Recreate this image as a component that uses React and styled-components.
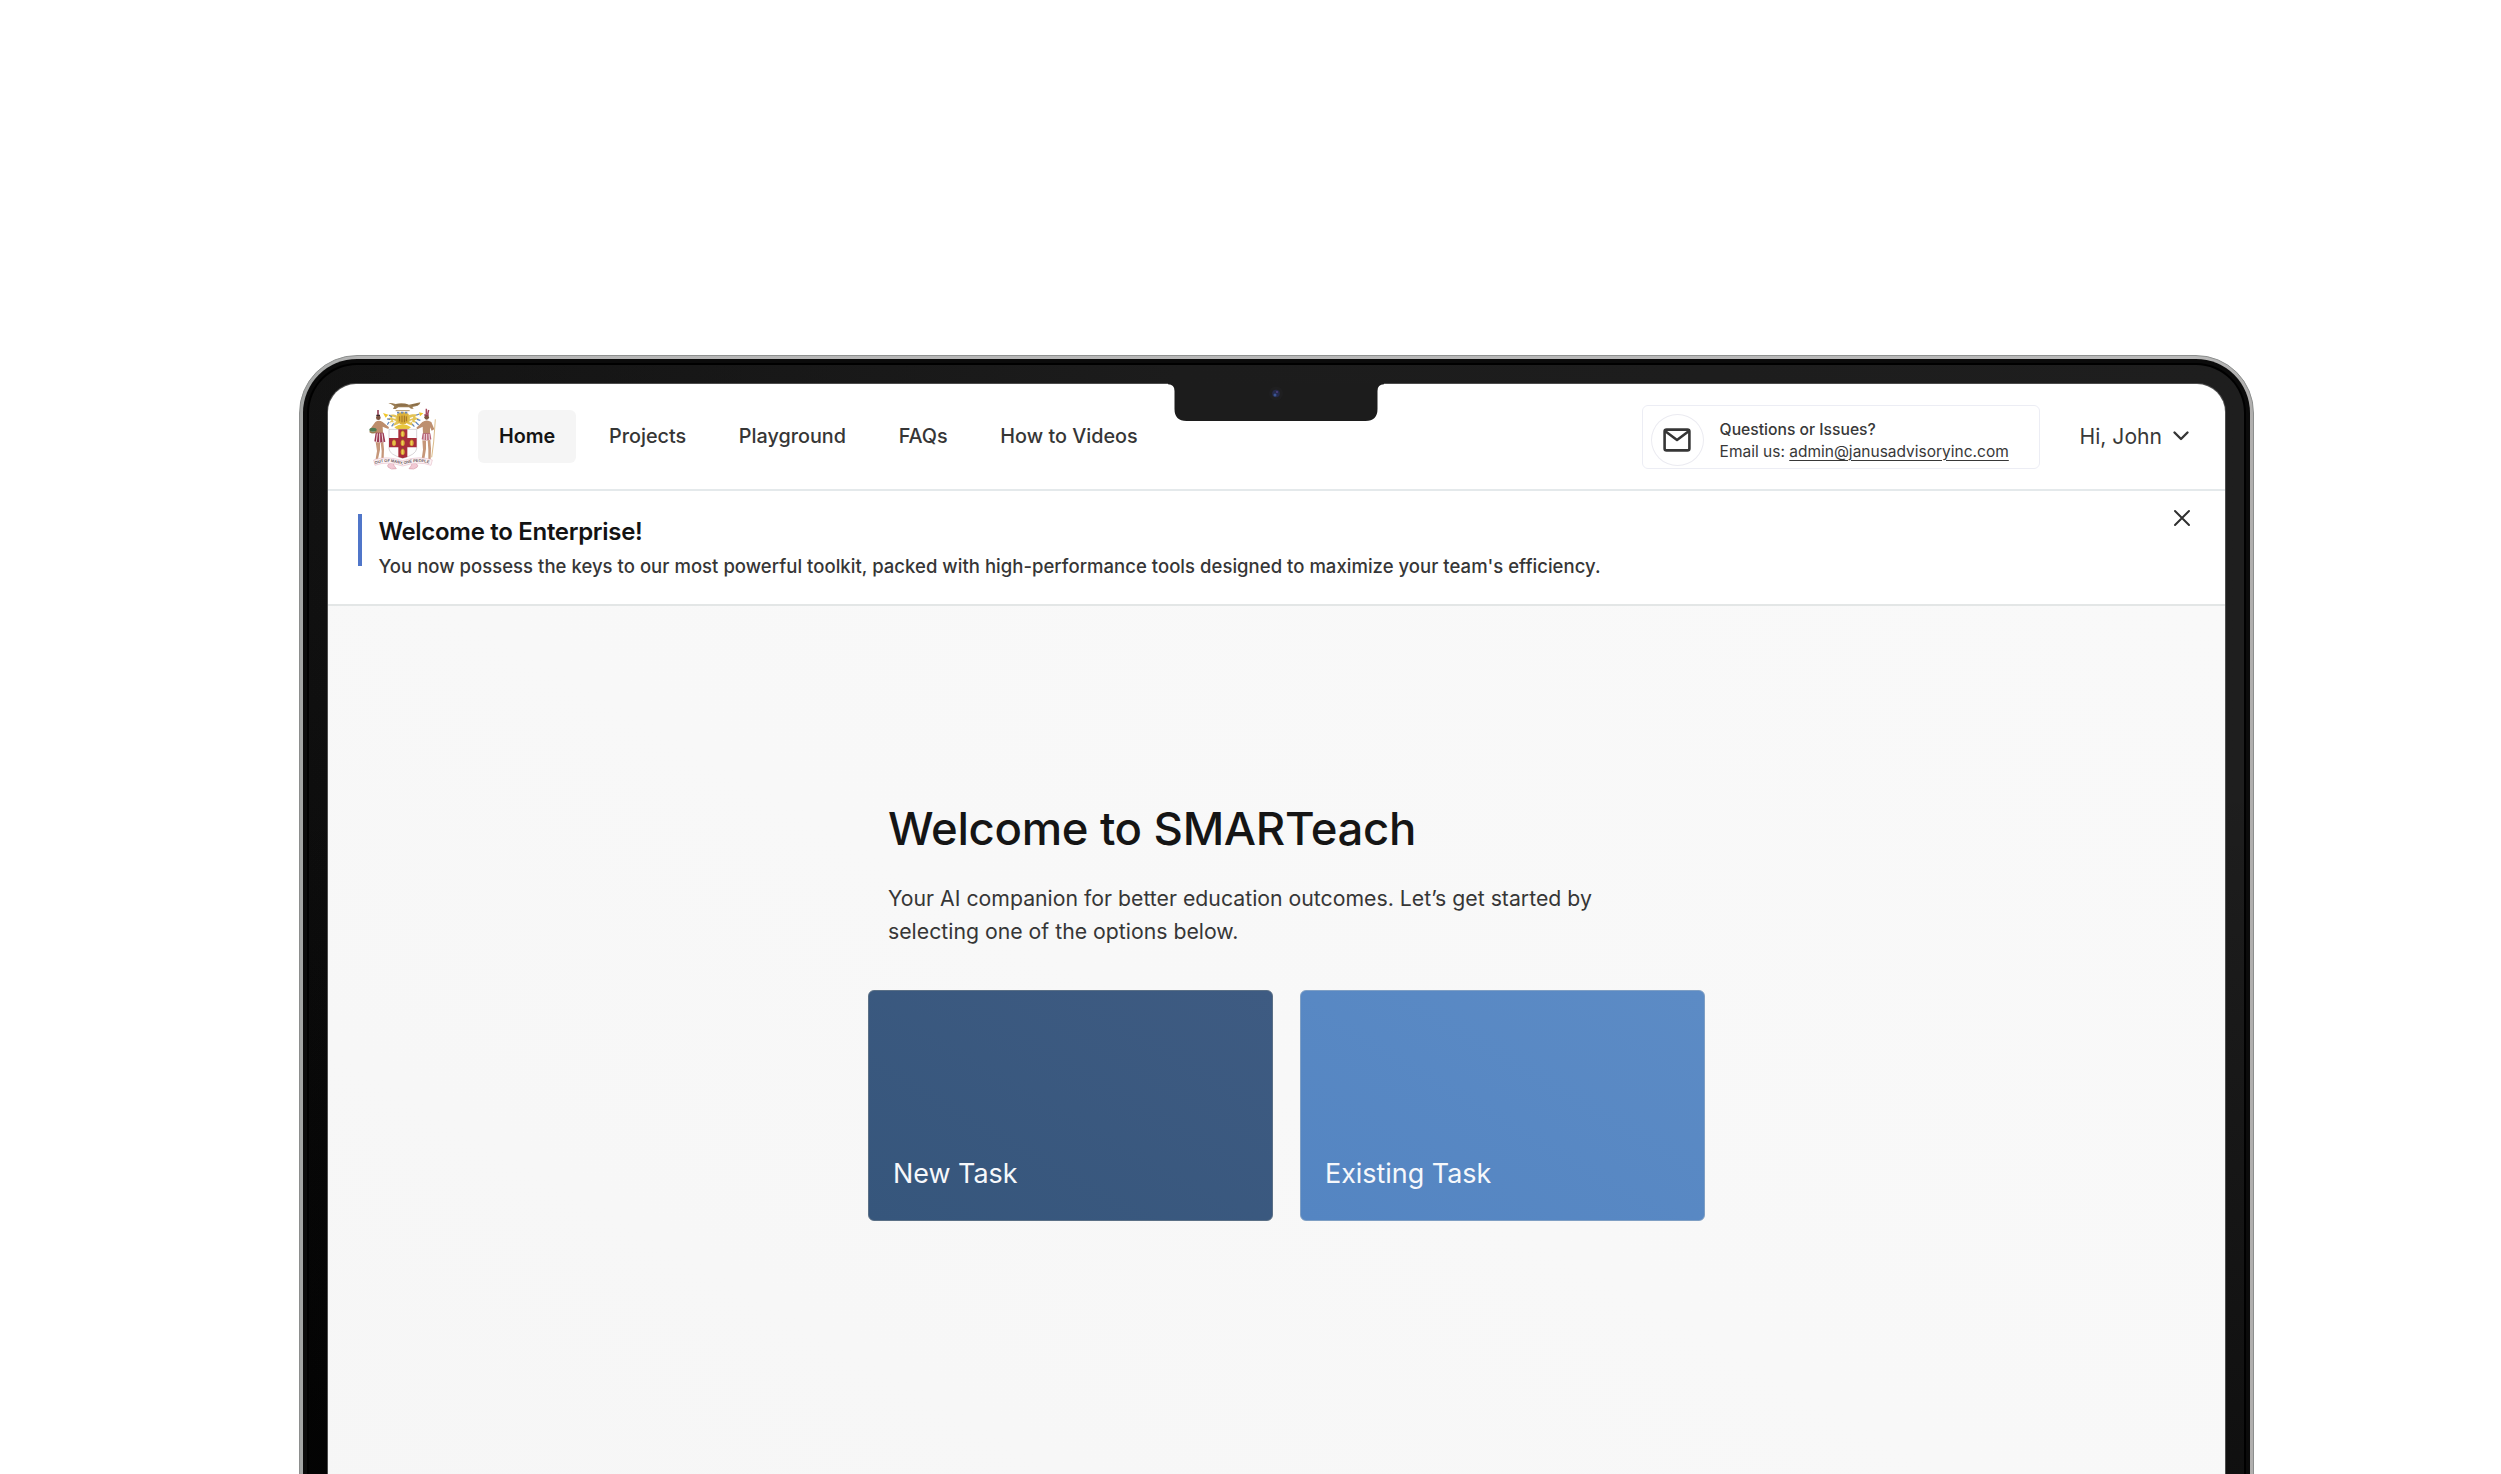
import React from "react";
import styled, { createGlobalStyle } from "styled-components";

const GlobalStyle = createGlobalStyle`
  * { box-sizing: border-box; }
  body {
    margin: 0;
    background: #fff;
    font-family: Inter, "Liberation Sans", sans-serif;
    -webkit-font-smoothing: antialiased;
  }
  h1, h2, p { margin: 0; }
`;

const Stage = styled.div`
  width: 2501px;
  height: 1474px;
  padding: 355px 0 0 299px;
  overflow: hidden;
  background: #fff;
`;

const Rim = styled.div`
  width: 1955px;
  height: 1200px;
  padding: 3px 3px 0;
  border: 1px solid #8d8f8e;
  border-radius: 58px 58px 0 0;
  background: linear-gradient(90deg, #a3a5a4, #b5b5b5 3%, #b8b8b8 97%, #b0afae);
`;

const Gasket = styled.div`
  height: 100%;
  padding: 4px 4px 0;
  border-radius: 54px 54px 0 0;
  background: #0b0b0b;
`;

const Bezel = styled.div`
  position: relative;
  height: 100%;
  padding: 19px 19px 0;
  border: 2px solid #000;
  border-bottom: 0;
  border-radius: 50px 50px 0 0;
  background: linear-gradient(180deg, rgba(3, 3, 3, 0) 35%, rgba(3, 3, 3, 0.55) 95%),
    linear-gradient(90deg, rgba(30, 30, 30, 0) 0%, #1c1c1c 45%, #1e1e1e 100%),
    linear-gradient(180deg, #131313 0%, #0c0c0c 50%, #040404 90%);
`;

const Screen = styled.div`
  display: flex;
  flex-direction: column;
  height: 100%;
  border-radius: 28px 28px 0 0;
  overflow: hidden;
  background: #fff;
  box-shadow: 0 0 0 1px #4c4c4c;
`;

const Notch = styled.svg`
  position: absolute;
  left: 859px;
  top: 18px;
`;

const Header = styled.header`
  display: flex;
  align-items: center;
  height: 107px;
  padding: 0 35px 0 41px;
  border-bottom: 2px solid #e4e9eb;
`;

const Nav = styled.nav`
  display: flex;
  gap: 10.7px;
  margin-left: 41px;
`;

const NavItem = styled.a`
  padding: 0 21px;
  margin-right: ${(p) => (p.$active ? "1px" : 0)};
  border-radius: 6px;
  line-height: 53px;
  font-size: 19.8px;
  font-weight: ${(p) => (p.$active ? 600 : 500)};
  color: ${(p) => (p.$active ? "#141414" : "#363636")};
  background: ${(p) => (p.$active ? "#f5f5f5" : "transparent")};
`;

const Contact = styled.div`
  display: flex;
  align-items: center;
  width: 398px;
  height: 64px;
  margin-left: auto;
  padding: 6px 0 0 8px;
  border: 1.5px solid #ecedf4;
  border-radius: 6px;
`;

const IconRing = styled.span`
  display: grid;
  place-items: center;
  width: 53px;
  height: 52px;
  border: 1.5px solid #ebebf1;
  border-radius: 50%;
`;

const ContactText = styled.div`
  margin-left: 16px;
  padding-top: 2px;
  font-size: 15.5px;
  line-height: 21.5px;
  color: #383838;
`;

const ContactTitle = styled.p`
  font-size: 15.7px;
  font-weight: 500;
`;

const MailLink = styled.a`
  text-decoration: underline;
  text-decoration-thickness: 1.3px;
  text-underline-offset: 3px;
`;

const User = styled.div`
  display: flex;
  align-items: center;
  gap: 10px;
  margin-left: 40px;
  padding-bottom: 1px;
  font-size: 21.1px;
  font-weight: 400;
  color: #383838;
`;

const Banner = styled.section`
  display: flex;
  align-items: flex-start;
  height: 115px;
  padding: 23px 34px 0 30px;
  border-bottom: 2px solid #e3e6e6;
`;

const Accent = styled.span`
  width: 4px;
  height: 52px;
  margin-right: 16.5px;
  background: #5076c9;
`;

const BannerTitle = styled.h2`
  padding-top: 1px;
  font-size: 24px;
  font-weight: 600;
  line-height: 34px;
  letter-spacing: -0.3px;
  color: #131313;
`;

const BannerText = styled.p`
  font-size: 18.5px;
  font-weight: 500;
  line-height: 34.5px;
  letter-spacing: 0.033px;
  color: #363636;
`;

const Close = styled.svg`
  margin: -5px 0 0 auto;
`;

const Main = styled.main`
  flex: 1;
  padding: 196px 0 0 540px;
  background: linear-gradient(210deg, #f9f9f9, #f8f8f8 50%, #f6f6f6);
`;

const Title = styled.h1`
  padding-left: 20px;
  font-size: 45.5px;
  font-weight: 500;
  line-height: 54px;
  letter-spacing: -0.33px;
  color: #151515;
`;

const Lead = styled.p`
  width: 760px;
  padding: 26px 0 0 20px;
  font-size: 21.25px;
  line-height: 33.3px;
  color: #363636;
`;

const Cards = styled.div`
  display: flex;
  gap: 27px;
  margin-top: 41px;
`;

const Card = styled.button`
  display: flex;
  align-items: flex-end;
  width: 405px;
  height: 231px;
  padding: 0 24px 29px;
  border: 1px solid ${(p) => p.$edge};
  border-radius: 6px;
  font: 400 26.9px/36px Inter, "Liberation Sans", sans-serif;
  color: #f6f8fb;
  background: linear-gradient(30deg, ${(p) => p.$from}, ${(p) => p.$to});
`;

const Crest = () => (
  <svg width="68" height="70" viewBox="0 0 204 210">
    {/* mantling */}
    <path d="M98 52 C80 32 70 38 58 38 L66 46 L54 50 L68 55 L60 62 L78 60 L72 72 L88 66 Z" fill="#e3c356" />
    <path d="M104 52 C122 32 132 38 146 37 L138 45 L150 50 L136 55 L144 62 L128 60 L134 72 L116 66 Z" fill="#e3c356" />
    <path d="M42 33 l16 5 -8 9z M150 31 l13 3 -10 9z" fill="#f0c62a" />
    <path d="M60 40 l9 4 M54 51 l9 1 M60 60 l-5 8 M74 64 l-6 9 M142 40 l9 -4 M144 52 l10 3 M140 60 l9 9 M130 66 l6 8" stroke="#5d83bd" strokeWidth="3.5" />
    <path d="M70 46 l10 3 M72 55 l8 5 M64 66 l6 -4 M132 46 l-9 4 M130 56 l-8 4" stroke="#fbf9f0" strokeWidth="4.5" />
    {/* helmet and wreath */}
    <path d="M84 36 Q101 24 119 36 L118 60 Q101 76 86 60 Z" fill="#dcb23a" />
    <path d="M84 32 h36" stroke="#6c88b4" strokeWidth="5" strokeDasharray="7 5" />
    <path d="M92 43 v15 M99 41 v20 M106 41 v20 M112 43 v15" stroke="#94651f" strokeWidth="2.6" />
    <path d="M76 76 Q101 58 126 76 L118 82 H84 Z" fill="#e8c63c" />
    {/* crocodile */}
    <path d="M58 3 Q68 2 80 6 Q100 1 120 8 L154 1 Q155 7 146 11 L130 15 L134 20 H126 L120 16 H88 L80 21 H72 L76 13 Q66 6 58 3 Z" fill="#9a7c53" />
    <path d="M80 26 h42" stroke="#b6945a" strokeWidth="3" />
    <path d="M82 9 h34 M128 10 l20 -4" stroke="#7a623f" strokeWidth="2.2" />
    {/* shield */}
    <path d="M60 82 H143 V140 Q141 158 101 169 Q61 158 60 140 Z" fill="#fdfdfd" stroke="#b5adb1" strokeWidth="1.5" />
    <path d="M88 82 h27 v26 h28 v28 h-28 v29 l-14 4 -13 -4 v-29 H60 v-28 h28z" fill="#a82d3b" />
    {[[101, 96], [75, 123], [101, 123], [128, 123], [101, 150]].map(([x, y]) => (
      <g key={`${x}-${y}`}>
        <ellipse cx={x} cy={y} rx="6" ry="9" fill="#dcae36" />
        <path d={`M${x - 3} ${y - 9} l3 -4 3 4z`} fill="#8a7429" />
        <path d={`M${x} ${y - 6} v12`} stroke="#f4d76a" strokeWidth="2.5" />
      </g>
    ))}
    {/* left supporter */}
    <path d="M27 24 v15" stroke="#8e3048" strokeWidth="4.5" />
    <circle cx="28" cy="47" r="7" fill="#7d5440" />
    <path d="M22 40 h11" stroke="#3b2a2a" strokeWidth="4" />
    <path d="M19 60 Q29 52 41 60 L60 76 L58 81 L41 74 L42 94 H20 L20 80 L5 88 L3 82 Z" fill="#bd8d6c" />
    <ellipse cx="12" cy="83" rx="11" ry="6" fill="#4e7b51" />
    <path d="M2 88 q10 9 20 0" stroke="#9a7b4c" strokeWidth="4.5" fill="none" />
    <path d="M20 92 H44 L49 119 Q32 125 16 118 Z" fill="#9b3a52" />
    <path d="M25 94 l-3 26 M32 94 v27 M39 94 l3 26" stroke="#f1dfe2" strokeWidth="3" />
    <path d="M20 120 l4 27 -4 24 h7 l6 -28 0 -21z M35 122 l3 25 -1 24 h7 l1 -30 -2 -20z" fill="#c6977a" />
    {/* right supporter */}
    <path d="M172 20 v17 M179 24 l-3 13" stroke="#a5455c" strokeWidth="4.5" />
    <circle cx="173" cy="46" r="7" fill="#7d5440" />
    <path d="M166 39 h13" stroke="#8e3048" strokeWidth="4" />
    <path d="M160 60 Q173 51 187 60 L196 82 L188 86 L183 76 L183 96 H162 L161 74 L145 82 L142 77 Z" fill="#bd8f6f" />
    <path d="M161 94 H184 L187 112 Q173 119 158 112 Z" fill="#b76478" />
    <path d="M166 96 l-1 18 M173 96 v19 M180 96 l1 18" stroke="#f3e3e6" strokeWidth="3" />
    <path d="M160 115 l2 28 -4 28 h8 l5 -30 0 -25z M176 115 l2 28 0 28 h7 l1 -32 -2 -25z" fill="#c6977a" />
    <path d="M199 52 L194 120 L188 166" stroke="#dcbb88" strokeWidth="3" fill="none" />
    {/* motto ribbon */}
    <path d="M72 182 q-22 4 -14 14 q8 8 24 4 q-8 -8 -10 -18z M130 182 q22 4 14 14 q-8 8 -24 4 q8 -8 10 -18z" fill="#f1c9d4" stroke="#d79bab" strokeWidth="2" />
    <path d="M14 174 Q50 160 101 176 Q152 160 190 174 L186 190 Q150 176 101 192 Q52 176 18 190 Z" fill="#fdf3f5" stroke="#e6bcc7" strokeWidth="1.8" />
    <path id="mottoPath" d="M19 187 Q52 172 101 188 Q152 172 186 187" fill="none" />
    <text fontSize="12" fontWeight="600" fill="#6b5a60" fontFamily="Liberation Sans, sans-serif">
      <textPath href="#mottoPath" textLength="164">OUT OF MANY, ONE PEOPLE</textPath>
    </text>
  </svg>
);

const MailIcon = () => (
  <svg width="28" height="24" viewBox="0 0 28 24" fill="none" stroke="#363636" strokeWidth="2.6" strokeLinejoin="round">
    <rect x="1.6" y="1.6" width="24.8" height="20.8" rx="2" />
    <path d="M2 3 L14 12 L26 3" />
  </svg>
);

const NAV = ["Home", "Projects", "Playground", "FAQs", "How to Videos"];

export default function App() {
  return (
    <>
      <GlobalStyle />
      <Stage>
        <Rim>
          <Gasket>
            <Bezel>
              <Screen>
                <Header>
                  <Crest />
                  <Nav>
                    {NAV.map((label, i) => (
                      <NavItem key={label} $active={i === 0}>{label}</NavItem>
                    ))}
                  </Nav>
                  <Contact>
                    <IconRing><MailIcon /></IconRing>
                    <ContactText>
                      <ContactTitle>Questions or Issues?</ContactTitle>
                      <p>Email us: <MailLink>admin@janusadvisoryinc.com</MailLink></p>
                    </ContactText>
                  </Contact>
                  <User>
                    Hi, John
                    <svg width="18" height="12" viewBox="0 0 18 12" fill="none" stroke="#363636" strokeWidth="2.4" strokeLinecap="round" strokeLinejoin="round">
                      <path d="M2.5 2.5 L9 9 L15.5 2.5" />
                    </svg>
                  </User>
                </Header>
                <Banner>
                  <Accent />
                  <div>
                    <BannerTitle>Welcome to Enterprise!</BannerTitle>
                    <BannerText>
                      You now possess the keys to our most powerful toolkit, packed with high-performance tools designed to maximize your team's efficiency.
                    </BannerText>
                  </div>
                  <Close width="18" height="18" viewBox="0 0 18 18" fill="none" stroke="#303030" strokeWidth="2" strokeLinecap="round">
                    <path d="M2 2 L16 16 M16 2 L2 16" />
                  </Close>
                </Banner>
                <Main>
                  <Title>Welcome to SMARTeach</Title>
                  <Lead>
                    Your AI companion for better education outcomes. Let’s get started by
                    <br />
                    selecting one of the options below.
                  </Lead>
                  <Cards>
                    <Card $from="#36567c" $to="#3e5b82" $edge="#5b7086">New Task</Card>
                    <Card $from="#5485c2" $to="#5c8bc5" $edge="#7f9fc4">Existing Task</Card>
                  </Cards>
                </Main>
              </Screen>
              <Notch width="216" height="40" viewBox="0 0 216 40">
                <path d="M0 0 V1.300 Q6.500 1.300 6.500 8 V26 Q6.500 38 18.500 38 H197.500 Q209.500 38 209.500 26 V8 Q209.500 1.300 216 1.300 V0 Z" fill="#1c1c1c" />
                <circle cx="108" cy="10.500" r="7" fill="#1f1f20" />
                <circle cx="108" cy="10.500" r="3.800" fill="#252a4a" />
                <circle cx="107" cy="12" r="1.500" fill="#3a5695" />
                <circle cx="109" cy="9" r="1.100" fill="#4b3f7d" />
              </Notch>
            </Bezel>
          </Gasket>
        </Rim>
      </Stage>
    </>
  );
}
